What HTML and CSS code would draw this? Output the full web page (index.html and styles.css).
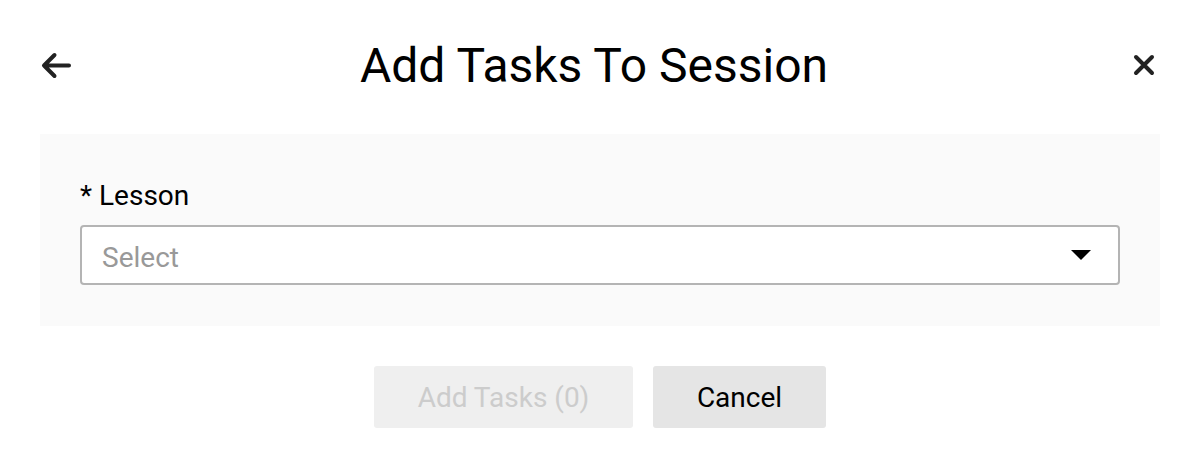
FILE: index.html
```html
<!DOCTYPE html>
<html>
<head>
  <title>Add Tasks To Session</title>
  <link rel="stylesheet" href="styles.css">
</head>
<body>
  <div class="dialog">
    <div class="header">
      <button class="iconButton" aria-label="Back">
        <svg width="32" height="32" viewBox="0 0 32 32"><path d="M4 12.5h25M14.5 2L4 12.5 14.5 23" transform="translate(0 4)" fill="none" stroke="#222" stroke-width="4" stroke-linecap="round" stroke-linejoin="round"/></svg>
      </button>
      <h1 class="title">Add Tasks To Session</h1>
      <button class="iconButton" aria-label="Close">
        <svg width="32" height="32" viewBox="0 0 32 32"><path d="M8 8l16 16M24 8L8 24" fill="none" stroke="#222" stroke-width="4" stroke-linecap="round"/></svg>
      </button>
    </div>

    <div class="formSection">
      <label class="fieldLabel" for="lesson">* Lesson</label>
      <div class="select" id="lesson">
        <span class="placeholder">Select</span>
        <svg width="20" height="10" viewBox="0 0 20 10"><path d="M0 0h20L10 10z" fill="#000"/></svg>
      </div>
    </div>

    <div class="actions">
      <button class="btn btnPrimary" disabled>Add Tasks (0)</button>
      <button class="btn btnSecondary">Cancel</button>
    </div>
  </div>
</body>
</html>
```

FILE: styles.css
```css
body {
  margin: 0;
  font-family: Roboto, "Liberation Sans", sans-serif;
  background-color: #fff;
  color: #000;
}

.dialog {
  width: 1120px;
  padding: 0 38px 0 40px;
}

.header {
  display: flex;
  align-items: center;
  justify-content: space-between;
  height: 130px;
  padding-bottom: 4px;
}

.iconButton {
  background: none;
  border: none;
  padding: 0;
  width: 32px;
  height: 32px;
  cursor: pointer;
}

.iconButton svg {
  display: block;
}

.title {
  margin: 0 12px 0 0;
  font-size: 48px;
  font-weight: 400;
}

.formSection {
  background-color: #fafafa;
  padding: 45px 40px 41px 40px;
}

.fieldLabel {
  display: block;
  font-size: 28px;
  line-height: 33px;
  margin-bottom: 13px;
}

.select {
  display: flex;
  align-items: center;
  justify-content: space-between;
  height: 56px;
  padding: 0 27px 0 20px;
  background-color: #fff;
  border: 2px solid #b4b4b4;
  border-radius: 4px;
}

.placeholder {
  font-size: 28px;
  color: #999;
  padding-top: 4px;
}

.actions {
  display: flex;
  justify-content: center;
  gap: 20px;
  padding: 40px 0;
}

.btn {
  height: 62px;
  border: none;
  border-radius: 3px;
  font-family: inherit;
  font-size: 28px;
  cursor: pointer;
}

.btnPrimary {
  width: 259px;
  background-color: #efefef;
  color: #ccc;
}

.btnSecondary {
  width: 173px;
  background-color: #e5e5e5;
  color: #000;
}
```
